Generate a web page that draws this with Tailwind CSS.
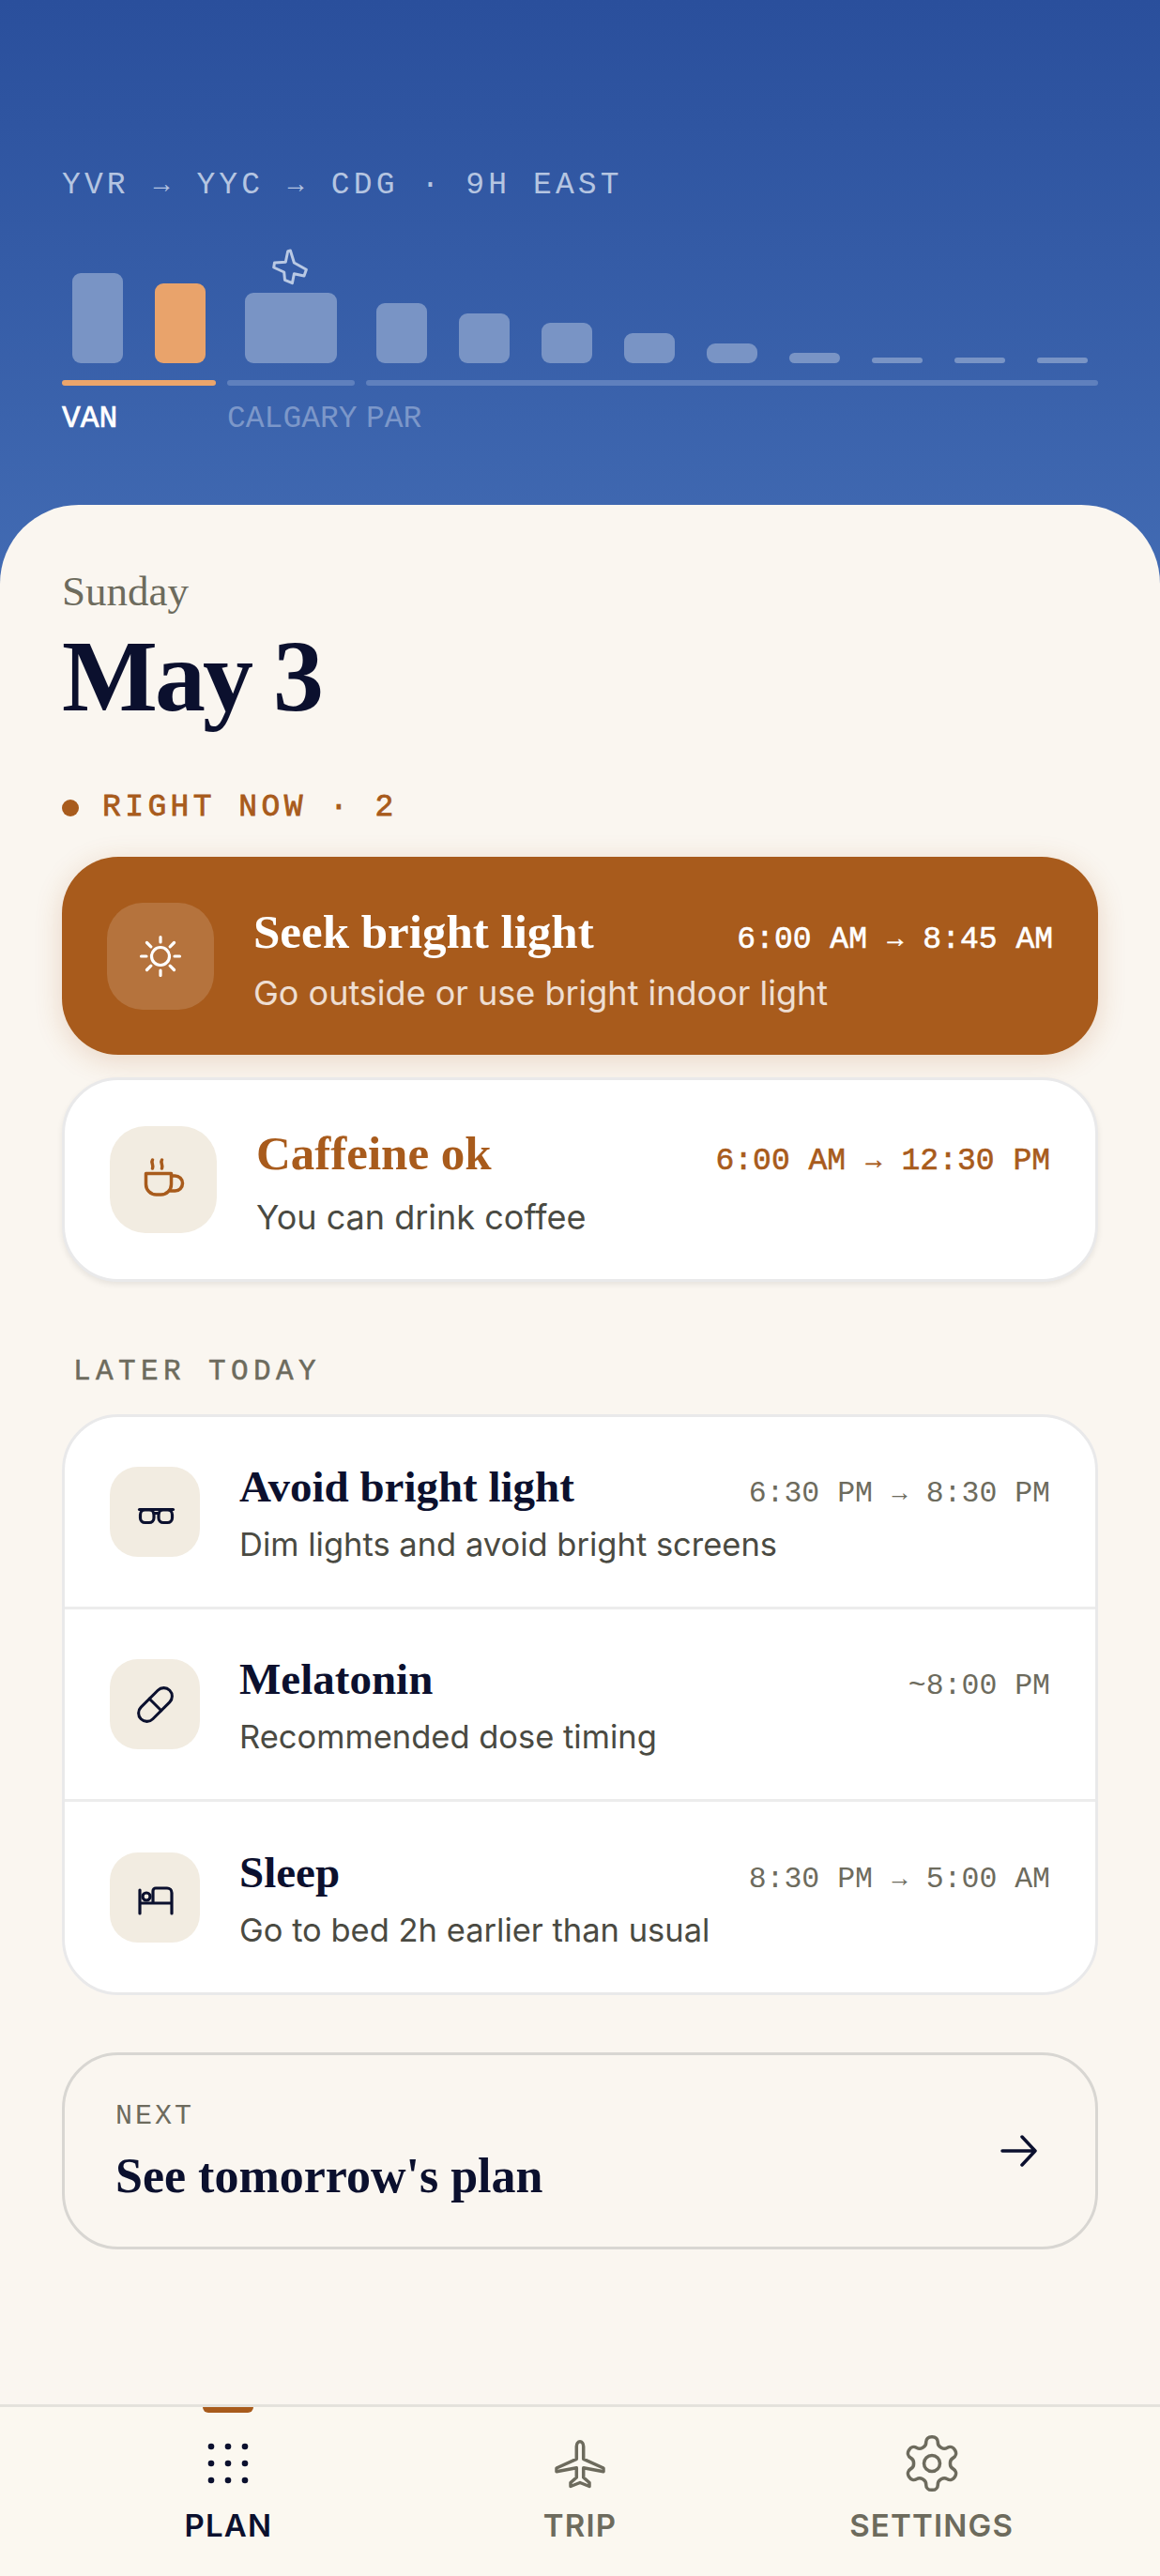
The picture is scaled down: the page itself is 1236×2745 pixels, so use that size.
<!DOCTYPE html>
<html lang="en">
<head>
  <meta charset="UTF-8">
  <meta name="viewport" content="width=device-width, initial-scale=1.0">
  <script src="https://cdn.jsdelivr.net/npm/@tailwindcss/browser@4"></script>
  <title>Plan</title>
</head>
<body class="bg-[#faf6f0] font-[Inter,sans-serif]">
  <div class="flex flex-col h-[2745px] w-[1236px] overflow-hidden">

    <!-- route header -->
    <header class="h-[622px] shrink-0 bg-gradient-to-b from-[#2a4f9c] to-[#426bb3] px-[66px] pt-[178px]">
      <p class="font-['Liberation_Mono',monospace] text-[33px] leading-[40px] tracking-[4.1px] text-[#b5c5e1] whitespace-nowrap">YVR <span class="inline-block scale-[0.85]">→</span> YYC <span class="inline-block scale-[0.85]">→</span> CDG · 9H EAST</p>

      <div class="relative grid grid-cols-[164px_136px_1fr] gap-x-[12px] mt-[73px]">
        <svg class="absolute left-[222px] top-[-26px] w-[42px] h-[40px]" viewBox="0 0 42 40" fill="none" stroke="#b9c9e4" stroke-width="3" stroke-linejoin="round">
          <path d="M21.4 2 25.4 15 38.4 22.3 36 29 25.4 26.7 23.4 36.7 15.5 33.3 14.7 25 3.7 20 4.5 15 16.3 14.3 18.7 2.7Z"/>
        </svg>

        <div>
          <div class="flex items-end gap-[34px] h-[96px] px-[11px]">
            <div class="w-[54px] h-[96px] rounded-[9px] bg-[#7994c5]"></div>
            <div class="w-[54px] h-[85px] rounded-[9px] bg-[#e9a36b]"></div>
          </div>
          <div class="h-[6px] mt-[18px] rounded-full bg-[#eba56b]"></div>
          <p class="font-['Liberation_Mono',monospace] [-webkit-text-stroke:0.7px_currentColor] text-[33px] leading-[40px] mt-[16px] text-white">VAN</p>
        </div>

        <div>
          <div class="flex items-end justify-center h-[96px]">
            <div class="w-[98px] h-[75px] rounded-[9px] bg-[#7994c5]"></div>
          </div>
          <div class="h-[6px] mt-[18px] rounded-full bg-[#5f80bd]"></div>
          <p class="font-['Liberation_Mono',monospace] text-[33px] leading-[40px] mt-[16px] text-[#7c97c9]">CALGARY</p>
        </div>

        <div>
          <div class="flex items-end gap-[33.5px] h-[96px] px-[11px]">
            <div class="flex-1 h-[64px] rounded-[9px] bg-[#7994c5]"></div>
            <div class="flex-1 h-[53px] rounded-[9px] bg-[#7994c5]"></div>
            <div class="flex-1 h-[43px] rounded-[9px] bg-[#7994c5]"></div>
            <div class="flex-1 h-[32px] rounded-[9px] bg-[#7994c5]"></div>
            <div class="flex-1 h-[21px] rounded-[9px] bg-[#7994c5]"></div>
            <div class="flex-1 h-[11px] rounded-full bg-[#7994c5]"></div>
            <div class="flex-1 h-[6px] rounded-full bg-[#7994c5]"></div>
            <div class="flex-1 h-[6px] rounded-full bg-[#7994c5]"></div>
            <div class="flex-1 h-[6px] rounded-full bg-[#7994c5]"></div>
          </div>
          <div class="h-[6px] mt-[18px] rounded-full bg-[#5f80bd]"></div>
          <p class="font-['Liberation_Mono',monospace] text-[33px] leading-[40px] mt-[16px] text-[#7c97c9]">PAR</p>
        </div>
      </div>
    </header>

    <!-- day sheet -->
    <main class="flex-1 mt-[-84px] rounded-t-[84px] bg-[#faf6f0] px-[66px] pt-[67px] relative">
      <p class="font-['Liberation_Serif',serif] text-[45px] leading-[50px] text-[#6d6b5d]">Sunday</p>
      <h1 class="font-['Liberation_Serif',serif] font-bold text-[108px] leading-[120px] tracking-[-3px] mt-[6px] text-[#0b102e]">May 3</h1>

      <div class="flex items-center gap-[25px] mt-[60px]">
        <span class="w-[18px] h-[18px] rounded-full bg-[#a85b1c]"></span>
        <span class="font-['Liberation_Mono',monospace] [-webkit-text-stroke:0.8px_currentColor] text-[33px] leading-[40px] tracking-[4.4px] text-[#a85b1c]">RIGHT NOW · 2</span>
      </div>

      <!-- active now -->
      <div class="flex items-center h-[211px] mt-[32px] rounded-[60px] bg-[#a85b1c] pl-[48px] pr-[48px] shadow-[0_6px_30px_rgba(168,91,28,0.2)]">
        <div class="flex items-center justify-center w-[114px] h-[114px] shrink-0 rounded-[38px] bg-white/15">
          <svg class="w-[48px] h-[48px]" viewBox="0 0 48 48" fill="none" stroke="#fff" stroke-width="3.2" stroke-linecap="round">
            <circle cx="24" cy="24" r="9.5"/>
            <path d="M24 3.5V9M24 39v5.5M3.5 24H9M39 24h5.500M9.500 9.500l4.300 4.300M34.200 34.200l4.300 4.300M9.500 38.500l4.300-4.300M34.200 13.800l4.300-4.300"/>
          </svg>
        </div>
        <div class="flex-1 ml-[42px] pt-[6px]">
          <div class="flex items-baseline justify-between">
            <span class="font-['Liberation_Serif',serif] font-bold text-[51px] leading-[60px] text-white">Seek bright light</span>
            <span class="font-['Liberation_Mono',monospace] [-webkit-text-stroke:0.6px_currentColor] text-[33px] leading-[40px] text-white">6:00 AM <span class="inline-block scale-[0.85]">→</span> 8:45 AM</span>
          </div>
          <p class="text-[36px] leading-[46px] mt-[12px] text-white/80">Go outside or use bright indoor light</p>
        </div>
      </div>

      <div class="flex items-center h-[218px] mt-[24px] rounded-[60px] border-[3px] border-[#e9e9ea] bg-white pl-[48px] pr-[48px] shadow-[0_3px_6px_rgba(0,0,0,0.08)]">
        <div class="flex items-center justify-center w-[114px] h-[114px] shrink-0 rounded-[38px] bg-[#f2ece1]">
          <svg class="w-[60px] h-[60px]" viewBox="0 0 60 60" fill="none" stroke="#a85b1c" stroke-width="3.5" stroke-linecap="round" stroke-linejoin="round">
            <path d="M11.500 23.500h27V35a11 11 0 0 1-11 11h-5a11 11 0 0 1-11-11Z"/>
            <path d="M38.500 26h4a8 8 0 0 1 0 16h-5"/>
            <path d="M18.500 9c-2 3 1.500 5 0 9M28.500 9c-2 3 1.500 5 0 9"/>
          </svg>
        </div>
        <div class="flex-1 ml-[42px] pt-[5px]">
          <div class="flex items-baseline justify-between">
            <span class="font-['Liberation_Serif',serif] font-bold text-[51px] leading-[60px] text-[#a85b1c]">Caffeine ok</span>
            <span class="font-['Liberation_Mono',monospace] [-webkit-text-stroke:0.6px_currentColor] text-[33px] leading-[40px] text-[#a85b1c]">6:00 AM <span class="inline-block scale-[0.85]">→</span> 12:30 PM</span>
          </div>
          <p class="text-[36px] leading-[46px] mt-[15px] text-[#4a4a42]">You can drink coffee</p>
        </div>
      </div>

      <p class="font-['Liberation_Mono',monospace] [-webkit-text-stroke:0.5px_currentColor] text-[31px] leading-[40px] tracking-[5.400px] mt-[76px] ml-[12px] text-[#6d6b5d]">LATER TODAY</p>

      <!-- later today list -->
      <div class="mt-[25px] rounded-[60px] border-[3px] border-[#e9e9ea] bg-white divide-y-[3px] divide-[#ececec]">
        <div class="flex items-center h-[205px] pl-[48px] pr-[48px]">
          <div class="flex items-center justify-center w-[96px] h-[96px] shrink-0 rounded-[30px] bg-[#f2ece1]">
            <svg class="w-[60px] h-[60px] translate-y-[2px]" viewBox="0 0 60 60" fill="none" stroke="#0b102e" stroke-width="3.200" stroke-linecap="round" stroke-linejoin="round">
              <path d="M13.500 25.500h36"/>
              <rect x="14.500" y="26" width="14.500" height="13.500" rx="5"/>
              <rect x="34" y="26" width="14.500" height="13.500" rx="5"/>
              <path d="M29 29.500h5"/>
            </svg>
          </div>
          <div class="flex-1 ml-[42px] pt-[2px]">
            <div class="flex items-baseline justify-between">
              <span class="font-['Liberation_Serif',serif] font-bold text-[47px] leading-[56px] text-[#0b102e]">Avoid bright light</span>
              <span class="font-['Liberation_Mono',monospace] text-[31.500px] leading-[40px] text-[#6d6b5d]">6:30 PM <span class="inline-block scale-[0.85]">→</span> 8:30 PM</span>
            </div>
            <p class="text-[34.500px] leading-[44px] mt-[12px] text-[#4a4a42]">Dim lights and avoid bright screens</p>
          </div>
        </div>

        <div class="flex items-center h-[205px] pl-[48px] pr-[48px]">
          <div class="flex items-center justify-center w-[96px] h-[96px] shrink-0 rounded-[30px] bg-[#f2ece1]">
            <svg class="w-[43px] h-[43px]" viewBox="0 0 24 24" fill="none" stroke="#0b102e" stroke-width="1.700" stroke-linecap="round" stroke-linejoin="round">
              <path d="m10.500 20.500 10-10a4.950 4.950 0 1 0-7-7l-10 10a4.950 4.950 0 1 0 7 7Z"/>
              <path d="m8.500 8.500 7 7"/>
            </svg>
          </div>
          <div class="flex-1 ml-[42px] pt-[2px]">
            <div class="flex items-baseline justify-between">
              <span class="font-['Liberation_Serif',serif] font-bold text-[47px] leading-[56px] text-[#0b102e]">Melatonin</span>
              <span class="font-['Liberation_Mono',monospace] text-[31.500px] leading-[40px] text-[#6d6b5d]">~8:00 PM</span>
            </div>
            <p class="text-[34.500px] leading-[44px] mt-[12px] text-[#4a4a42]">Recommended dose timing</p>
          </div>
        </div>

        <div class="flex items-center h-[203px] pl-[48px] pr-[48px]">
          <div class="flex items-center justify-center w-[96px] h-[96px] shrink-0 rounded-[30px] bg-[#f2ece1]">
            <svg class="w-[60px] h-[60px]" viewBox="0 0 60 60" fill="none" stroke="#0b102e" stroke-width="3.200" stroke-linecap="round" stroke-linejoin="round">
              <path d="M14 22v25M14 36h34M48 47V25a5 5 0 0 0-5-5H31a3 3 0 0 0-3 3v13"/>
              <circle cx="21" cy="29" r="4"/>
            </svg>
          </div>
          <div class="flex-1 ml-[42px] pt-[2px]">
            <div class="flex items-baseline justify-between">
              <span class="font-['Liberation_Serif',serif] font-bold text-[47px] leading-[56px] text-[#0b102e]">Sleep</span>
              <span class="font-['Liberation_Mono',monospace] text-[31.500px] leading-[40px] text-[#6d6b5d]">8:30 PM <span class="inline-block scale-[0.85]">→</span> 5:00 AM</span>
            </div>
            <p class="text-[34.500px] leading-[44px] mt-[12px] text-[#4a4a42]">Go to bed 2h earlier than usual</p>
          </div>
        </div>
      </div>

      <!-- next day link -->
      <div class="flex items-center justify-between h-[210px] mt-[61px] rounded-[60px] border-[3px] border-[#d8d6d2] pl-[54px] pr-[60px]">
        <div>
          <p class="font-['Liberation_Mono',monospace] text-[30px] leading-[36px] tracking-[3px] text-[#6d6b5d]">NEXT</p>
          <p class="font-['Liberation_Serif',serif] font-bold text-[52px] leading-[58px] mt-[17px] text-[#0b102e]">See tomorrow's plan</p>
        </div>
        <svg class="w-[42px] h-[36px]" viewBox="0 0 42 36" fill="none" stroke="#0b102e" stroke-width="3.500" stroke-linecap="round" stroke-linejoin="round">
          <path d="M3 18h35M24 3l14 15-14 15"/>
        </svg>
      </div>
    </main>

    <!-- bottom tabs -->
    <nav class="relative grid grid-cols-3 h-[183px] shrink-0 border-t-[3px] border-[#e4e2dc] bg-[#fbf8f0] px-[56px]">
      <div class="relative flex flex-col items-center pt-[24px]">
        <span class="absolute top-0 w-[54px] h-[6px] rounded-b-full bg-[#a85b1c]"></span>
        <svg class="w-[72px] h-[72px]" viewBox="0 0 72 72" fill="#0b102e">
          <circle cx="18" cy="18" r="3.300"/><circle cx="36" cy="18" r="3.300"/><circle cx="54" cy="18" r="3.300"/>
          <circle cx="18" cy="36" r="3.300"/><circle cx="36" cy="36" r="3.300"/><circle cx="54" cy="36" r="3.300"/>
          <circle cx="18" cy="54" r="3.300"/><circle cx="36" cy="54" r="3.300"/><circle cx="54" cy="54" r="3.300"/>
        </svg>
        <span class="text-[33px] leading-[40px] font-semibold tracking-[1.2px] mt-[10px] text-[#0b102e]">PLAN</span>
      </div>
      <div class="flex flex-col items-center pt-[24px]">
        <svg class="w-[72px] h-[72px]" viewBox="-6 -8 72 72" fill="none" stroke="#6d6b5d" stroke-width="3.500" stroke-linejoin="round">
          <path d="M30 4.700C28 4.700 26.300 7 26.300 10V23.300L5 33V36.700L26.300 32.700V43L20 48.500V52.500L30 48.500 40 52.500V48.500L33.700 43V32.700L55 36.700V33L33.700 23.300V10C33.700 7 32 4.700 30 4.700Z"/>
        </svg>
        <span class="text-[33px] leading-[40px] font-semibold tracking-[1.2px] mt-[10px] text-[#6d6b5d]">TRIP</span>
      </div>
      <div class="flex flex-col items-center pt-[24px]">
        <svg class="w-[68px] h-[68px] my-[2px]" viewBox="0 0 24 24" fill="none" stroke="#6d6b5d" stroke-width="1.250" stroke-linecap="round" stroke-linejoin="round">
          <path d="M12.220 2h-.44a2 2 0 0 0-2 2v.18a2 2 0 0 1-1 1.730l-.43.25a2 2 0 0 1-2 0l-.15-.08a2 2 0 0 0-2.730.73l-.22.38a2 2 0 0 0 .73 2.730l.15.1a2 2 0 0 1 1 1.720v.51a2 2 0 0 1-1 1.740l-.15.09a2 2 0 0 0-.73 2.730l.22.38a2 2 0 0 0 2.730.73l.15-.08a2 2 0 0 1 2 0l.43.25a2 2 0 0 1 1 1.730V20a2 2 0 0 0 2 2h.44a2 2 0 0 0 2-2v-.18a2 2 0 0 1 1-1.730l.43-.25a2 2 0 0 1 2 0l.15.08a2 2 0 0 0 2.730-.73l.22-.39a2 2 0 0 0-.73-2.730l-.15-.08a2 2 0 0 1-1-1.740v-.5a2 2 0 0 1 1-1.740l.15-.09a2 2 0 0 0 .73-2.730l-.22-.38a2 2 0 0 0-2.730-.73l-.15.08a2 2 0 0 1-2 0l-.43-.25a2 2 0 0 1-1-1.730V4a2 2 0 0 0-2-2z"/>
          <circle cx="12" cy="12" r="3"/>
        </svg>
        <span class="text-[33px] leading-[40px] font-semibold tracking-[1.2px] mt-[10px] text-[#6d6b5d]">SETTINGS</span>
      </div>
    </nav>
  </div>
</body>
</html>
